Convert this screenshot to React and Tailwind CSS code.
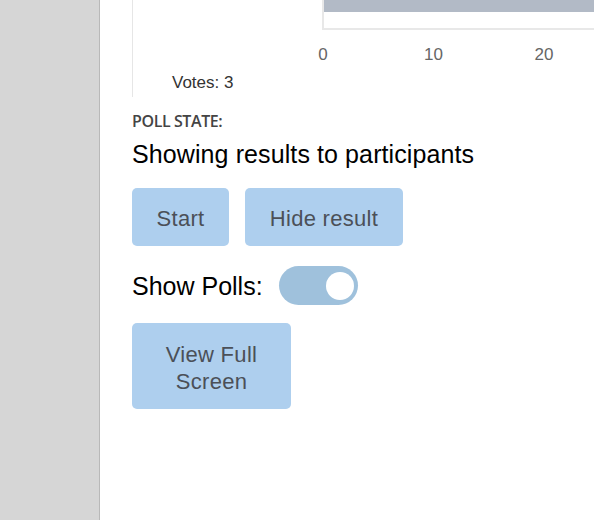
import React, { useState } from "react";

const ticks = [0, 10, 20];

export default function App() {
  const [showPolls, setShowPolls] = useState(true);

  return (
    <div className="flex h-[520px] w-[594px] overflow-hidden bg-white" style={{ fontFamily: "'Liberation Sans', Arial, sans-serif" }}>
      {/* Sidebar */}
      <div className="w-[100px] shrink-0 bg-[#d6d6d6] border-r border-[#b9b9b9]" />

      {/* Main */}
      <div className="flex-1 pl-8 min-w-0">
        {/* Chart */}
        <div className="h-[97px] border-l border-[#e6e6e6] relative">
          <div className="ml-[189px] w-[400px] h-[30px] border-l-2 border-b-2 border-[#e8e8e8]">
            <div className="h-[12px] bg-[#b2bac6]" />
          </div>
          <div className="relative ml-[190px] h-[24px] mt-[15px] text-[17px] leading-[20px] text-[#666]">
            {ticks.map((t, i) => (
              <span key={t} className="absolute top-0 -translate-x-1/2" style={{ left: i * 110.5 }}>
                {t}
              </span>
            ))}
          </div>
          <div className="ml-[39px] mt-[4px] text-[17px] leading-[20px] text-[#333]">Votes: 3</div>
        </div>

        {/* Poll state */}
        <div className="mt-[14px] text-[16px] leading-[20px] font-semibold text-[#444] tracking-[-0.4px]" style={{ fontFamily: "'Open Sans', sans-serif" }}>
          POLL STATE:
        </div>
        <div className="mt-2 text-[25px] leading-[30px] text-black tracking-[0.1px]">Showing results to participants</div>

        <div className="mt-[19px] flex gap-4">
          <button className="w-[97px] pt-[18px] pb-[14px] text-[22px] leading-[26px] text-[#4b5058] bg-[#aecfee] rounded-[5px] tracking-[0.3px]">Start</button>
          <button className="w-[158px] pt-[18px] pb-[14px] text-[22px] leading-[26px] text-[#4b5058] bg-[#aecfee] rounded-[5px] tracking-[0.3px]">Hide result</button>
        </div>

        <div className="mt-5 flex items-center gap-4 h-[39px]">
          <span className="text-[25px] leading-[30px] text-black">Show Polls:</span>
          <button
            onClick={() => setShowPolls(!showPolls)}
            className={`w-[79px] h-[39px] rounded-full bg-[#9fc1dc] flex items-center px-[4px] ${showPolls ? "justify-end" : "justify-start"}`}
          >
            <span className="w-[28px] h-[28px] rounded-full bg-white block" />
          </button>
        </div>

        <button className="mt-[18px] w-[159px] px-6 pt-[18px] pb-[14px] text-[22px] leading-[27px] text-[#4b5058] bg-[#aecfee] rounded-[5px] text-center tracking-[0.3px]">
          View Full Screen
        </button>
      </div>
    </div>
  );
}
